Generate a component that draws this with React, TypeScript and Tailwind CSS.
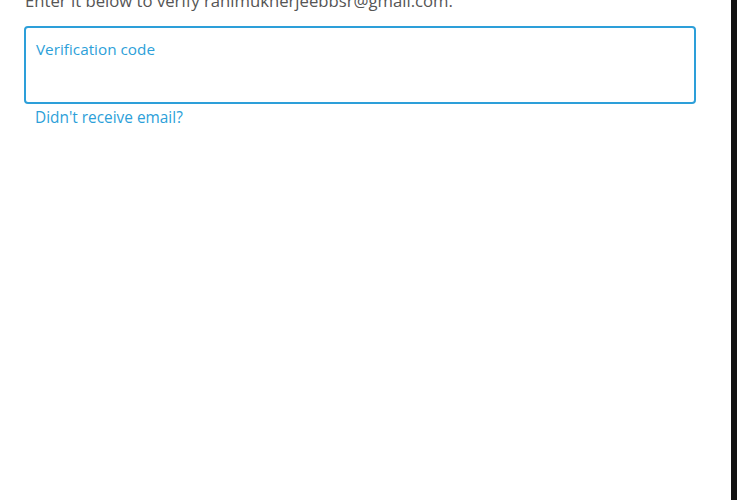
export default function App() {
  return (
    <div className="flex h-[500px] w-[737px] overflow-hidden bg-white" style={{ fontFamily: '"Open Sans", "Noto Sans", sans-serif' }}>
      <div className="flex-1 overflow-hidden pl-[24px] pr-[35px]">
        <p className="mt-[-11px] pl-[1px] text-[16.7px] leading-[24px] text-[#555]">
          Enter it below to verify rahimukherjeebbsr@gmail.com.
        </p>
        <div className="mt-[13px] h-[78px] rounded-[4px] border-2 border-[#2d9fd9] px-[10px] pt-[9px]">
          <span className="text-[15.3px] leading-[22px] text-[#2d9fd9]">Verification code</span>
        </div>
        <a className="mt-[3px] block pl-[11px] text-[15.4px] leading-[22px] text-[#2d9fd9]">Didn't receive email?</a>
      </div>
      <div className="w-[6px] bg-[#111]" />
    </div>
  );
}
